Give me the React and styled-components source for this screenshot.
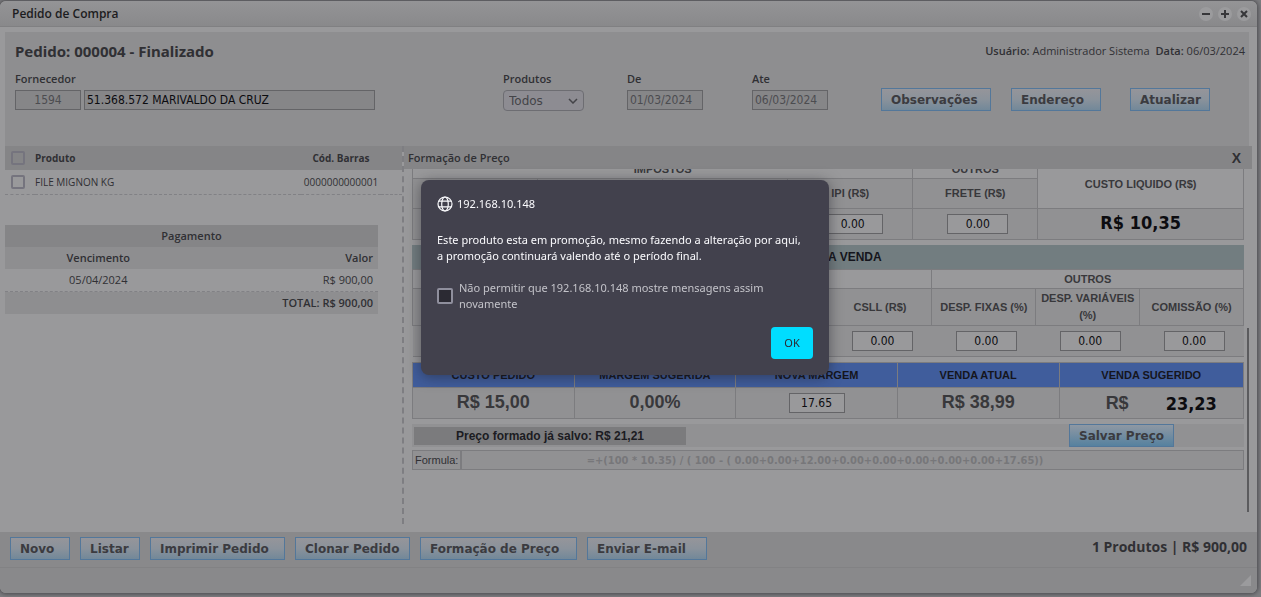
import React, { useState } from "react"
import styled, { createGlobalStyle } from "styled-components"

const sans = `"Open Sans", "Noto Sans", sans-serif`
const noto = `"Noto Sans", "Open Sans", sans-serif`
const arial = `"Liberation Sans", Arial, sans-serif`
const tahoma = `"DejaVu Sans Condensed", "DejaVu Sans", sans-serif`
const verdana = `"DejaVu Sans", Verdana, sans-serif`

const actions = [
  { label: "Novo", width: 60 },
  { label: "Listar", width: 60 },
  { label: "Imprimir Pedido", width: 135 },
  { label: "Clonar Pedido", width: 115 },
  { label: "Formação de Preço", width: 157 },
  { label: "Enviar E-mail", width: 120 },
]

const custos = ["ICMS (R$)", "ST (R$)", "PIS (R$)", "IPI (R$)", "FRETE (R$)"]

const vendas = [
  "ICMS (%)",
  "PIS (R$)",
  "COFINS (R$)",
  "IRPJ (R$)",
  "CSLL (R$)",
  "DESP. FIXAS (%)",
  "DESP. VARIÁVEIS (%)",
  "COMISSÃO (%)",
]

const Pedido = () => (
  <Panel>
    <PanelTop>
      <Title>Pedido: 000004 - Finalizado</Title>
      <User>
        <span><b>Usuário:</b> Administrador Sistema</span>
        <span><b>Data:</b> 06/03/2024</span>
      </User>
    </PanelTop>
    <Fields>
      <Field>
        <Label htmlFor="fornecedor">Fornecedor</Label>
        <Inputs>
          <Input id="fornecedor" $width={66} $center defaultValue="1594" />
          <Input aria-label="Nome do fornecedor" $width={291} $dark defaultValue="51.368.572 MARIVALDO DA CRUZ" />
        </Inputs>
      </Field>
      <Field>
        <Label htmlFor="produtos">Produtos</Label>
        <SelectBox>
          <Select id="produtos">
            <option>Todos</option>
          </Select>
          <Chevron viewBox="0 0 10 6">
            <path d="M1 1l4 4 4-4" />
          </Chevron>
        </SelectBox>
      </Field>
      <Field>
        <Label htmlFor="de">De</Label>
        <Input id="de" $width={76} defaultValue="01/03/2024" />
      </Field>
      <Field>
        <Label htmlFor="ate">Ate</Label>
        <Input id="ate" $width={76} defaultValue="06/03/2024" />
      </Field>
      <Button $width={110}>Observações</Button>
      <Button $width={90}>Endereço</Button>
      <Button $width={80}>Atualizar</Button>
    </Fields>
  </Panel>
)

const Produtos = () => (
  <ListColumn>
    <List>
      <thead>
        <tr>
          <th><Check type="checkbox" aria-label="Selecionar todos" /></th>
          <th>Produto</th>
          <th>Cód. Barras</th>
          <th />
        </tr>
      </thead>
      <tbody>
        <tr>
          <td><Check type="checkbox" aria-label="Selecionar produto" /></td>
          <td>FILE MIGNON KG</td>
          <td>0000000000001</td>
          <td />
        </tr>
      </tbody>
    </List>
    <Payment>
      <thead>
        <tr><th colSpan="2">Pagamento</th></tr>
        <tr><th>Vencimento</th><th>Valor</th></tr>
      </thead>
      <tbody>
        <tr><td>05/04/2024</td><td>R$ 900,00</td></tr>
      </tbody>
      <tfoot>
        <tr><td colSpan="2">TOTAL: R$ 900,00</td></tr>
      </tfoot>
    </Payment>
  </ListColumn>
)

const Formacao = () => (
  <PriceColumn>
    <PriceHead>
      <span>Formação de Preço</span>
      <CloseX aria-label="Fechar">X</CloseX>
    </PriceHead>
    <Scroll>
      <Content>
        <Grid>
          <colgroup>
            <col span="5" style={{ width: "15.05%" }} />
            <col />
          </colgroup>
          <tbody>
            <Row $height={19}>
              <Cell as="th" colSpan="4" $light>IMPOSTOS</Cell>
              <Cell as="th" $light>OUTROS</Cell>
              <Cell as="th" rowSpan="2" $light>CUSTO LIQUIDO (R$)</Cell>
            </Row>
            <Row $height={30}>
              {custos.map((c) => <Cell as="th" key={c}>{c}</Cell>)}
            </Row>
            <Row $height={31}>
              {custos.map((c) => (
                <Cell key={c} $field><Num aria-label={c} defaultValue="0.00" /></Cell>
              ))}
              <Cell><Total>R$ 10,35</Total></Cell>
            </Row>
          </tbody>
        </Grid>
        <Band>CUSTO NA VENDA</Band>
        <Grid>
          <tbody>
            <Row $height={19}>
              <Cell as="th" colSpan="5" $light>IMPOSTOS</Cell>
              <Cell as="th" colSpan="3" $light>OUTROS</Cell>
            </Row>
            <Row $height={37}>
              {vendas.map((v) => <Cell as="th" key={v}>{v}</Cell>)}
            </Row>
            <Row $height={31}>
              {vendas.map((v) => (
                <Cell key={v} $field $open><Num aria-label={v} defaultValue="0.00" /></Cell>
              ))}
            </Row>
          </tbody>
        </Grid>
        <Grid $gap>
          <colgroup>
            <col span="4" style={{ width: "19.45%" }} />
            <col />
          </colgroup>
          <tbody>
            <Row $height={25}>
              <Cell as="th" $blue>CUSTO PEDIDO</Cell>
              <Cell as="th" $blue>MARGEM SUGERIDA</Cell>
              <Cell as="th" $blue>NOVA MARGEM</Cell>
              <Cell as="th" $blue>VENDA ATUAL</Cell>
              <Cell as="th" $blue>VENDA SUGERIDO</Cell>
            </Row>
            <Row $height={31}>
              <Cell><Big>R$ 15,00</Big></Cell>
              <Cell><Big>0,00%</Big></Cell>
              <Cell><Num aria-label="Nova margem" $small defaultValue="17.65" /></Cell>
              <Cell><Big>R$ 38,99</Big></Cell>
              <Cell>
                <Suggested><Big>R$</Big><Total>23,23</Total></Suggested>
              </Cell>
            </Row>
          </tbody>
        </Grid>
        <SaveRow>
          <Saved>Preço formado já salvo: R$ 21,21</Saved>
          <Button $width={105} $strong>Salvar Preço</Button>
        </SaveRow>
        <Formula>
          <label htmlFor="formula">Formula:</label>
          <input
            id="formula"
            readOnly
            value="=+(100 * 10.35) / ( 100 - ( 0.00+0.00+12.00+0.00+0.00+0.00+0.00+0.00+17.65))"
          />
        </Formula>
      </Content>
      <Thumb />
    </Scroll>
  </PriceColumn>
)

const Alerta = ({ onClose }) => (
  <Overlay>
    <Dialog role="alertdialog" aria-labelledby="host" aria-describedby="msg">
      <Host>
        <svg width="16" height="16" viewBox="0 0 16 16" fill="none" stroke="#fbfbfe" strokeWidth="1.2">
          <circle cx="8" cy="8" r="7" />
          <ellipse cx="8" cy="8" rx="3.3" ry="7" />
          <path d="M1.8 5.2h12.4M1.8 10.8h12.4" />
        </svg>
        <span id="host">192.168.10.148</span>
      </Host>
      <Message id="msg">
        Este produto esta em promoção, mesmo fazendo a alteração por aqui,
        <br />
        a promoção continuará valendo até o período final.
      </Message>
      <Block>
        <input type="checkbox" />
        <span>
          Não permitir que 192.168.10.148 mostre mensagens assim
          <br />
          novamente
        </span>
      </Block>
      <Ok onClick={onClose}>OK</Ok>
    </Dialog>
  </Overlay>
)

const App = () => {
  const [alerta, setAlerta] = useState(true)

  return (
    <>
      <Global />
      <Window>
        <TitleBar>
          <span>Pedido de Compra</span>
          <WinButtons>
            <WinButton aria-label="Minimizar"><svg viewBox="0 0 14 14"><path d="M3 7h8" /></svg></WinButton>
            <WinButton aria-label="Maximizar"><svg viewBox="0 0 14 14"><path d="M3 7h8M7 3v8" /></svg></WinButton>
            <WinButton aria-label="Fechar"><svg viewBox="0 0 14 14"><path d="M4 4l6 6M10 4l-6 6" /></svg></WinButton>
          </WinButtons>
        </TitleBar>
        <Pedido />
        <Columns>
          <Produtos />
          <Formacao />
        </Columns>
        <Footer>
          {actions.map((a) => (
            <Button key={a.label} $width={a.width}>{a.label}</Button>
          ))}
          <Summary>1 Produtos | R$ 900,00</Summary>
        </Footer>
        <Status>
          <svg width="11" height="11" viewBox="0 0 11 11"><path d="M11 0v11H0z" fill="#9b9b9d" /></svg>
        </Status>
      </Window>
      {alerta && <Alerta onClose={() => setAlerta(false)} />}
    </>
  )
}

export default App


const Global = createGlobalStyle`
  * {
    box-sizing: border-box;
  }

  body {
    margin: 0;
    background: #7d7d80;
    font-family: ${sans};
    font-size: 11px;
    color: #303034;
  }

  button, input, select {
    font: inherit;
    color: inherit;
    margin: 0;
  }
`

const Window = styled.div`
  display: flex;
  flex-direction: column;
  margin: 1px 4px 4px 0;
  min-height: calc(100vh - 5px);
  background: #99999b;
  border-radius: 6px;
  overflow: hidden;
  box-shadow: 0 0 4px 1px #48484c;
`

const TitleBar = styled.header`
  display: flex;
  justify-content: space-between;
  align-items: center;
  height: 26px;
  padding: 0 6px 0 12px;
  margin-bottom: 5px;
  background: linear-gradient(#949496, #89898b);
  border-bottom: 1px solid #808082;
  font-size: 12px;
  font-weight: 600;
  color: #1c1c20;
`

const WinButtons = styled.div`
  display: flex;
  gap: 5px;
`

const WinButton = styled.button`
  width: 14px;
  height: 14px;
  padding: 0;
  border: 0;
  border-radius: 50%;
  background: #9b9b9d;

  svg {
    display: block;
    stroke: #37373a;
    stroke-width: 2;
  }
`

const Panel = styled.section`
  height: 114px;
  margin: 0 8px 0 5px;
  padding: 10px 10px 0;
  background: #8e8e90;
`

const PanelTop = styled.div`
  display: flex;
  justify-content: space-between;
  height: 30px;
  margin-right: -6px;
`

const Title = styled.h1`
  margin: 0;
  font-family: ${noto};
  font-size: 15px;
  line-height: 18px;
  font-weight: 700;
`

const User = styled.div`
  display: flex;
  gap: 6px;
  line-height: 18px;

  b {
    font-weight: 600;
  }
`

const Fields = styled.div`
  display: grid;
  grid-template-columns: 488fr 124fr 125fr 129fr 130fr 119fr 109fr;
  align-items: end;
`

const Field = styled.div`
  display: flex;
  flex-direction: column;
  height: 39px;
`

const Label = styled.label`
  height: 18px;
  line-height: 14px;
  font-weight: 600;
`

const Inputs = styled.div`
  display: flex;
  gap: 3px;
`

const Input = styled.input`
  width: ${(props) => props.$width}px;
  height: 20px;
  padding: 0 2px;
  border: 1px solid #646467;
  background: #868688;
  font-family: ${tahoma};
  font-size: 12px;
  text-align: ${(props) => (props.$center ? "center" : "left")};
  color: ${(props) => (props.$dark ? "#0c0c10" : "#4c4c50")};
`

const SelectBox = styled.div`
  position: relative;
  width: 81px;
`

const Select = styled.select`
  appearance: none;
  width: 100%;
  height: 21px;
  padding: 0 5px;
  border: 1px solid #6d6d72;
  border-radius: 4px;
  background: #8d8c92;
  font-family: ${verdana};
  font-size: 12px;
  color: #444448;
`

const Chevron = styled.svg`
  position: absolute;
  top: 8px;
  right: 6px;
  width: 10px;
  height: 6px;
  fill: none;
  stroke: #444448;
  stroke-width: 1.5;
  pointer-events: none;
`

const Button = styled.button`
  width: ${(props) => props.$width}px;
  height: 23px;
  padding: 0 0 0 9px;
  border: 1px solid #53779a;
  background: ${(props) => (props.$strong
    ? "linear-gradient(#8f98a3, #56819f)"
    : "linear-gradient(#95959a, #8a929b 50%, #728899)")};
  font-family: ${verdana};
  font-size: 12px;
  font-weight: 700;
  text-align: left;
  white-space: nowrap;
  color: #3b3b40;
`

const Columns = styled.main`
  display: flex;
  align-items: flex-start;
  flex: 1;
  margin: 0 5px;
  padding-bottom: 8px;
`

const ListColumn = styled.section`
  width: 399px;
  height: 378px;
  border-right: 2px dashed #7e7e82;
`

const Check = styled.input`
  appearance: none;
  display: block;
  width: 14px;
  height: 14px;
  border: 2px solid #75747e;
  border-radius: 2px;
`

const List = styled.table`
  width: 100%;
  table-layout: fixed;
  border-collapse: collapse;
  margin-bottom: 30px;
  font-size: 10px;

  th, td {
    height: 24px;
    padding: 0;
    text-align: left;
  }

  th {
    background: #858587;
    font-weight: 700;
  }

  td {
    border-bottom: 1px dashed #818185;
  }

  th:first-child, td:first-child {
    width: 30px;
    padding-left: 6px;
  }

  th:nth-child(3), td:nth-child(3) {
    width: 80px;
    text-align: center;
  }

  th:last-child, td:last-child {
    width: 21px;
  }
`

const Payment = styled.table`
  width: 373px;
  table-layout: fixed;
  border-collapse: collapse;

  th, td {
    height: 22px;
    padding: 0 5px;
    text-align: center;
    font-weight: 600;
  }

  tr > :nth-child(2) {
    text-align: right;
  }

  thead tr {
    background: #8e8e90;
  }

  thead tr:first-child {
    background: #858587;
  }

  tbody td {
    height: 23px;
    border-bottom: 1px dashed #818185;
    font-weight: 400;
  }

  tfoot td {
    background: #8e8e90;
    text-align: right;
  }
`

const PriceColumn = styled.section`
  flex: 1;
  min-width: 0;
`

const PriceHead = styled.div`
  display: flex;
  justify-content: space-between;
  align-items: center;
  height: 23px;
  padding: 0 9px 0 4px;
  background: #858587;
  font-weight: 600;
`

const CloseX = styled.button`
  padding: 0 2px;
  border: 0;
  background: none;
  font-family: ${arial};
  font-size: 14px;
  font-weight: 700;
`

const Scroll = styled.div`
  display: flex;
  align-items: flex-end;
  height: 343px;
  padding-left: 8px;
  overflow: hidden;
`

/* the panel is scrolled past the top of the first row */
const Content = styled.div`
  flex: 1;
  align-self: flex-start;
  margin-top: -10px;
  font-family: ${arial};
  font-size: 12px;
`

const Thumb = styled.div`
  width: 2px;
  height: 184px;
  margin: 0 3px;
  background: #5b5b5e;
`

const Grid = styled.table`
  width: 100%;
  margin-top: ${(props) => (props.$gap ? 5 : 0)}px;
  table-layout: fixed;
  border-collapse: collapse;

  th {
    font-size: 11px;
  }
`

const Row = styled.tr`
  height: ${(props) => props.$height}px;
`

const Cell = styled.td`
  padding: 0 0 0 ${(props) => (props.$field ? 5 : 0)}px;
  border: 1px solid #7c7c7f;
  ${(props) => props.$open && "border-left: 0; border-right: 0;"}
  background: ${(props) => (props.$blue ? "#405d9c" : props.$light ? "#99999b" : "#919193")};
  font-weight: 700;
  line-height: 17px;
  text-align: center;
  color: ${(props) => (props.$blue ? "#15151c" : "#38383b")};
`

const Num = styled.input`
  display: block;
  width: ${(props) => (props.$small ? 56 : 61)}px;
  height: 20px;
  margin: 0 auto;
  padding: 0;
  border: 1px solid #646467;
  background: #99999b;
  font-family: ${tahoma};
  font-size: 12px;
  font-weight: 400;
  text-align: center;
  color: #0c0c10;
`

const Total = styled.strong`
  font-family: ${tahoma};
  font-size: 18px;
  color: #0c0c10;
`

const Big = styled.strong`
  font-size: 18px;
`

const Suggested = styled.div`
  display: flex;
  justify-content: center;
  gap: 37px;
  padding-left: 20px;
`

const Band = styled.div`
  height: 24px;
  margin-top: 5px;
  background: #727d80;
  font-weight: 700;
  line-height: 25px;
  text-align: center;
  color: #15151c;
`

const SaveRow = styled.div`
  display: flex;
  align-items: center;
  justify-content: space-between;
  height: 23px;
  margin: 5px 0 3px;
  padding: 0 70px 0 2px;
  background: #919193;
`

const Saved = styled.div`
  width: 272px;
  background: #7b7b7d;
  font-weight: 700;
  line-height: 18px;
  text-align: center;
  color: #1c1c22;
`

const Formula = styled.div`
  display: flex;
  height: 20px;
  border: 1px solid #7c7c7f;
  background: #919193;

  label {
    width: 49px;
    padding-left: 2px;
    border-right: 2px solid #7c7c7f;
    font-size: 11px;
    line-height: 18px;
  }

  input {
    flex: 1;
    padding: 0 75px 0 0;
    border: 0;
    background: none;
    font-family: ${tahoma};
    font-size: 11px;
    font-weight: 700;
    text-align: center;
    color: #77777a;
  }
`

const Footer = styled.footer`
  display: flex;
  align-items: flex-start;
  gap: 10px;
  height: 35px;
  padding: 5px 10px 0;
  background: #89898b;
`

const Summary = styled.div`
  margin-left: auto;
  font-size: 14px;
  line-height: 20px;
  font-weight: 700;
`

const Status = styled.div`
  display: flex;
  justify-content: flex-end;
  align-items: flex-end;
  height: 26px;
  padding: 0 6px 7px;
  border-top: 1px solid #828284;
  background: #89898b;
`

const Overlay = styled.div`
  position: fixed;
  inset: 0;
  display: flex;
  justify-content: center;
  align-items: flex-start;
  padding: 180px 11px 0 0;
`

const Dialog = styled.div`
  display: flex;
  flex-direction: column;
  width: 408px;
  padding: 16px;
  border-radius: 8px;
  background: #42414d;
  box-shadow: 0 2px 14px rgba(28, 28, 34, 0.5);
  font-family: ${noto};
  font-size: 11px;
  line-height: 16px;
  white-space: nowrap;
  color: #fbfbfe;
`

const Host = styled.div`
  display: flex;
  gap: 4px;
  margin-bottom: 20px;
`

const Message = styled.p`
  margin: 0 0 16px;
`

const Block = styled.label`
  display: flex;
  align-items: center;
  gap: 6px;
  margin-bottom: 15px;
  color: #c3c3c9;

  input {
    appearance: none;
    width: 16px;
    height: 16px;
    border: 2px solid #8f8f9d;
    border-radius: 2px;
    background: #2b2a33;
  }
`

const Ok = styled.button`
  align-self: flex-end;
  width: 42px;
  height: 32px;
  padding: 0;
  border: 0;
  border-radius: 4px;
  background: #00ddff;
  color: #2b2a33;
`
